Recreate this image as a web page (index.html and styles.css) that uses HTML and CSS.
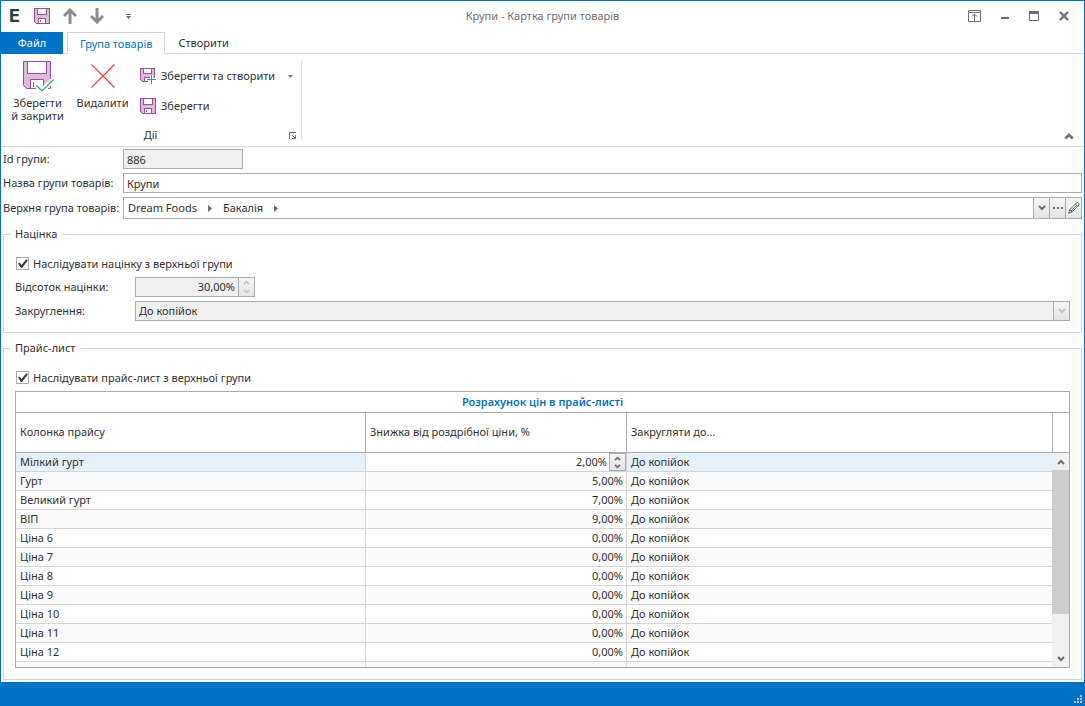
FILE: index.html
```html
<!DOCTYPE html>
<html lang="uk">
<head>
<meta charset="utf-8">
<title>Крупи - Картка групи товарів</title>
<link rel="stylesheet" href="styles.css">
</head>
<body>
<svg class="defs" aria-hidden="true">
  <symbol id="floppy" viewBox="0 0 16 16">
    <path d="M.5.5h15v15h-13l-2-2z" fill="#ddbadb" stroke="#9b4f96"/>
    <path d="M3.500.5h9v6h-9z" fill="#fff" stroke="#9b4f96"/>
    <path d="M4.500 15.500v-5h7v5z" fill="#fff" stroke="#9b4f96"/>
    <path d="M6.500 12v2" stroke="#9b4f96"/>
  </symbol>
  <symbol id="up" viewBox="0 0 8 6"><path d="M1 5l3-3 3 3" fill="none" stroke="currentColor" stroke-width="2"/></symbol>
  <symbol id="down" viewBox="0 0 8 6"><path d="M1 1l3 3 3-3" fill="none" stroke="currentColor" stroke-width="2"/></symbol>
</svg>
<div class="window">
  <header class="titlebar">
    <div class="quick">
      <span class="logo">E</span>
      <button class="tool" aria-label="Зберегти"><svg width="16" height="16" shape-rendering="crispEdges"><use href="#floppy"/></svg></button>
      <button class="tool" aria-label="Попередній"><svg width="14" height="16" viewBox="0 0 14 16"><path d="M7 16V2M1 8l6-6 6 6" fill="none" stroke="#8c8c8c" stroke-width="3"/></svg></button>
      <button class="tool" aria-label="Наступний"><svg width="14" height="16" viewBox="0 0 14 16"><path d="M7 0v14M1 8l6 6 6-6" fill="none" stroke="#8c8c8c" stroke-width="3"/></svg></button>
      <button class="tool" aria-label="Налаштувати панель"><svg width="5" height="5" viewBox="0 0 5 5"><path d="M0 0h5v1H0zM0 2h5L2.500 5z" fill="#6d6d6d"/></svg></button>
    </div>
    <h1 class="title">Крупи - Картка групи товарів</h1>
    <div class="controls">
      <button class="tool" aria-label="Показ стрічки"><svg width="13" height="12" viewBox="0 0 13 12"><path d="M.5.5h12v11H.5zM.5 2.500h12M6.500 11V4M4 6.500L6.500 4 9 6.500" fill="none" stroke="#6d6d6d"/></svg></button>
      <button class="tool" aria-label="Згорнути"><svg width="8" height="12" viewBox="0 0 8 12"><path d="M0 7h8v2H0z" fill="#6d6d6d"/></svg></button>
      <button class="tool" aria-label="Розгорнути"><svg width="10" height="10" viewBox="0 0 10 10"><path d="M.5.5h9v9h-9z" fill="none" stroke="#6d6d6d"/><path d="M0 0h10v3H0z" fill="#6d6d6d"/></svg></button>
      <button class="tool" aria-label="Закрити"><svg width="10" height="10" viewBox="0 0 10 10"><path d="M1 1l8 8M9 1L1 9" stroke="#6d6d6d" stroke-width="2.400"/></svg></button>
    </div>
  </header>

  <nav class="tabs">
    <button class="tab file">Файл</button>
    <button class="tab active">Група товарів</button>
    <button class="tab">Створити</button>
  </nav>

  <section class="ribbon">
    <div class="group">
      <div class="actions">
        <button class="large">
          <svg width="32" height="32" viewBox="0 0 32 32">
            <path d="M1.500 1.500h27v27h-24l-3-3z" fill="#ddbadb" stroke="#9b4f96"/>
            <path d="M5.500 1.500h19v12h-19z" fill="#fff" stroke="#9b4f96"/>
            <path d="M8.500 28.500v-9h13v9z" fill="#fff" stroke="#9b4f96"/>
            <path d="M11.500 22v5" stroke="#9b4f96"/>
            <path d="M14 25l6 6 12-12" fill="none" stroke="#fff" stroke-width="5"/>
            <path d="M14.500 25.500l5.500 5.500 11.500-11.500" fill="none" stroke="#21ad57" stroke-width="1.200"/>
          </svg>
          <span>Зберегти<br>й закрити</span>
        </button>
        <button class="large">
          <svg width="32" height="32" viewBox="0 0 32 32"><path d="M4.500 4.500l23 23M27.500 4.500l-23 23" stroke="#f04043" stroke-width="1.200"/></svg>
          <span>Видалити</span>
        </button>
        <div class="smalls">
          <button class="small">
            <svg width="16" height="16" viewBox="0 0 16 16" shape-rendering="crispEdges">
              <path d="M.5.5h14v13h-12l-2-2z" fill="#ddbadb" stroke="#9b4f96"/>
              <path d="M3.500.5h8v5h-8z" fill="#fff" stroke="#9b4f96"/>
              <path d="M4.500 13.500v-4h5v4z" fill="#fff" stroke="#9b4f96"/>
              <path d="M10 7h3v3h3v6H8v-3H6v-3h4z" fill="#fff"/>
              <path d="M11.500 7v9M7 11.500h9" stroke="#21ad57"/>
            </svg>
            <span>Зберегти та створити</span>
            <svg class="more" width="5" height="3" viewBox="0 0 5 3"><path d="M0 0h5L2.500 3z" fill="#7c7c7c"/></svg>
          </button>
          <button class="small">
            <svg width="16" height="16" shape-rendering="crispEdges"><use href="#floppy"/></svg>
            <span>Зберегти</span>
          </button>
        </div>
      </div>
      <div class="group-foot">
        <span>Дії</span>
        <button class="tool" aria-label="Параметри дій"><svg width="7" height="7" viewBox="0 0 7 7"><path d="M.5 7V.5H7M3 3l3 3M6.500 3v3.500H3" fill="none" stroke="#6d6d6d"/></svg></button>
      </div>
    </div>
    <button class="tool collapse" aria-label="Згорнути стрічку"><svg width="10" height="8" viewBox="0 0 8 6"><use href="#up"/></svg></button>
  </section>

  <main class="form">
    <div class="row">
      <label for="gid">Id групи:</label>
      <input class="box short" id="gid" value="886" disabled>
    </div>
    <div class="row">
      <label for="gname">Назва групи товарів:</label>
      <input class="box" id="gname" value="Крупи">
    </div>
    <div class="row path-row">
      <span class="label">Верхня група товарів:</span>
      <div class="box crumbs">
        <div class="trail">
          <span>Dream Foods</span>
          <svg width="4" height="7" viewBox="0 0 4 7"><path d="M0 0l4 3.500L0 7z" fill="#6d6d6d"/></svg>
          <span>Бакалія</span>
          <svg width="4" height="7" viewBox="0 0 4 7"><path d="M0 0l4 3.500L0 7z" fill="#6d6d6d"/></svg>
        </div>
        <button class="side" aria-label="Відкрити список"><svg width="8" height="6"><use href="#down"/></svg></button>
        <button class="side" aria-label="Вибрати"><svg width="10" height="2" viewBox="0 0 10 2"><path d="M0 0h2v2H0zM4 0h2v2H4zM8 0h2v2H8z" fill="#6d6d6d"/></svg></button>
        <button class="side" aria-label="Редагувати"><svg width="12" height="12" viewBox="0 0 12 12"><path d="M.7 11.300l1-3.600 6.800-6.800q1-.8 2 .2t.2 2L4 10zM7.500 2l2.500 2.500M1.700 7.700L4 10M3 9l5.500-5.500" fill="none" stroke="#6d6d6d"/></svg></button>
      </div>
    </div>

    <fieldset class="panel">
      <legend>Націнка</legend>
      <label class="check"><input type="checkbox" checked>Наслідувати націнку з верхньої групи</label>
      <div class="row inner">
        <label for="pct">Відсоток націнки:</label>
        <div class="box short spin off">
          <input id="pct" value="30,00%" disabled>
          <div class="steps"><button disabled aria-label="Більше"><svg width="7" height="5"><use href="#up"/></svg></button><button disabled aria-label="Менше"><svg width="7" height="5"><use href="#down"/></svg></button></div>
        </div>
      </div>
      <div class="row inner">
        <label for="rnd">Закруглення:</label>
        <div class="box combo off">
          <select id="rnd" disabled><option>До копійок</option></select>
          <span class="side"><svg width="8" height="6"><use href="#down"/></svg></span>
        </div>
      </div>
    </fieldset>

    <fieldset class="panel prices">
      <legend>Прайс-лист</legend>
      <label class="check"><input type="checkbox" checked>Наслідувати прайс-лист з верхньої групи</label>
      <div class="grid">
        <table>
          <colgroup><col class="c-name"><col class="c-pct"><col><col class="c-bar"></colgroup>
          <thead>
            <tr class="band"><th colspan="4">Розрахунок цін в прайс-листі</th></tr>
            <tr class="heads"><th>Колонка прайсу</th><th>Знижка від роздрібної ціни, %</th><th>Закругляти до...</th><th></th></tr>
          </thead>
          <tbody>
            <tr class="current"><td>Мілкий гурт</td><td class="edit"><div class="spin"><input aria-label="Знижка" value="2,00%"><div class="steps"><button aria-label="Більше"><svg width="7" height="5"><use href="#up"/></svg></button><button aria-label="Менше"><svg width="7" height="5"><use href="#down"/></svg></button></div></div></td><td>До копійок</td><td></td></tr>
            <tr><td>Гурт</td><td>5,00%</td><td>До копійок</td><td></td></tr>
            <tr><td>Великий гурт</td><td>7,00%</td><td>До копійок</td><td></td></tr>
            <tr><td>ВІП</td><td>9,00%</td><td>До копійок</td><td></td></tr>
            <tr><td>Ціна 6</td><td>0,00%</td><td>До копійок</td><td></td></tr>
            <tr><td>Ціна 7</td><td>0,00%</td><td>До копійок</td><td></td></tr>
            <tr><td>Ціна 8</td><td>0,00%</td><td>До копійок</td><td></td></tr>
            <tr><td>Ціна 9</td><td>0,00%</td><td>До копійок</td><td></td></tr>
            <tr><td>Ціна 10</td><td>0,00%</td><td>До копійок</td><td></td></tr>
            <tr><td>Ціна 11</td><td>0,00%</td><td>До копійок</td><td></td></tr>
            <tr><td>Ціна 12</td><td>0,00%</td><td>До копійок</td><td></td></tr>
            <tr><td></td><td></td><td>До копійок</td><td></td></tr>
          </tbody>
        </table>
        <div class="scroll">
          <button aria-label="Вгору"><svg width="8" height="6"><use href="#up"/></svg></button>
          <div class="track"><div class="thumb"></div></div>
          <button aria-label="Вниз"><svg width="8" height="6"><use href="#down"/></svg></button>
        </div>
      </div>
    </fieldset>
  </main>

  <footer class="status">
    <svg width="8" height="8" viewBox="0 0 8 8"><path d="M6 0h2v2H6zM3 3h2v2H3zM6 3h2v2H6zM0 6h2v2H0zM3 6h2v2H3zM6 6h2v2H6z" fill="#bcc4cc"/></svg>
  </footer>
</div>
</body>
</html>
```
FILE: styles.css
```css
* {
  box-sizing: border-box;
}

body {
  margin: 0;
  font: 11px/14px "Noto Sans", "Open Sans", sans-serif;
  color: #303030;
}

button,
input,
select {
  margin: 0;
  padding: 0;
  border: 0;
  background: none;
  font: inherit;
  color: inherit;
  opacity: 1;
}

svg {
  display: block;
  flex: none;
}

.defs {
  position: absolute;
  width: 0;
  height: 0;
}

.window {
  display: flex;
  flex-direction: column;
  height: 100vh;
  border: 1px solid #0072c6;
  border-bottom: 0;
  background: #fff;
}

.titlebar {
  display: grid;
  grid-template-columns: 1fr auto 1fr;
  align-items: center;
  height: 30px;
  flex: none;
}

.title {
  margin: 0;
  font-size: 11px;
  font-weight: 400;
  color: #6d6d6d;
}

.quick {
  display: flex;
  align-items: center;
  gap: 13px;
  padding-left: 8px;
}

.quick .tool:last-child {
  margin-left: 9px;
}

.logo {
  width: 12px;
  font-family: Inter, "Noto Sans", sans-serif;
  font-size: 18px;
  font-weight: 700;
  line-height: 20px;
  color: #2b3a44;
}

.controls {
  display: flex;
  align-items: center;
  justify-content: flex-end;
  gap: 20px;
  padding-right: 15px;
}

.tabs {
  display: flex;
  height: 23px;
  flex: none;
  padding-top: 1px;
  border-bottom: 1px solid #d4d4d4;
}

.tab {
  height: 22px;
  padding: 0 13px;
}

.tab.file {
  width: 62px;
  margin-right: 4px;
  background: #0072c6;
  color: #fff;
}

.tab.active {
  padding: 0 12px;
  border: 1px solid #d4d4d4;
  border-bottom: 0;
  background: #fff;
  color: #0072c6;
}

.ribbon {
  display: flex;
  justify-content: space-between;
  height: 93px;
  flex: none;
  padding: 6px 10px 6px 4px;
  border-bottom: 1px solid #d4d4d4;
}

.group {
  display: flex;
  flex-direction: column;
  justify-content: space-between;
  width: 297px;
  border-right: 1px solid #e1e1e1;
}

.actions {
  display: flex;
}

.large {
  display: flex;
  flex-direction: column;
  align-items: center;
  gap: 4px;
  width: 65px;
  line-height: 13px;
}

.smalls {
  display: flex;
  flex-direction: column;
  gap: 10px;
  padding: 6px 0 0 5px;
}

.small {
  display: flex;
  align-items: center;
  gap: 5px;
  height: 20px;
}

.more {
  margin-left: 8px;
}

.group-foot {
  display: grid;
  grid-template-columns: 1fr auto 1fr;
  align-items: center;
  height: 12px;
  padding-right: 5px;
}

.group-foot span {
  grid-column: 2;
}

.group-foot .tool {
  justify-self: end;
}

.collapse {
  align-self: flex-end;
  color: #6d6d6d;
}

.form {
  display: flex;
  flex-direction: column;
  flex: 1;
  min-height: 0;
  gap: 4px;
  padding: 2px 2px;
}

.row {
  display: grid;
  grid-template-columns: 120px 1fr;
  align-items: center;
}

.row .label,
.row label {
  white-space: nowrap;
}

.box {
  width: 100%;
  height: 20px;
  padding-left: 3px;
  border: 1px solid #ababab;
  background: #fff;
}

.short {
  width: 120px;
}

.off,
.box:disabled {
  background: #f0f0f0;
}

.crumbs {
  display: flex;
  height: 22px;
  padding-left: 4px;
}

.trail {
  display: flex;
  align-items: center;
  flex: 1;
  gap: 11px;
}

.side {
  display: flex;
  align-items: center;
  justify-content: center;
  width: 16px;
  border-left: 1px solid #ababab;
  background: linear-gradient(#f6f6f6, #e4e4e4);
  color: #6d6d6d;
}

.off .side,
.off .steps {
  color: #c3c3c3;
}

.panel {
  min-width: 0;
  margin: 4px 0 0;
  padding: 15px 11px 11px;
  border: 1px solid #d4d4d4;
}

.panel legend {
  margin-left: -4px;
  padding: 0 5px 0 4px;
}

.check {
  display: flex;
  align-items: center;
  gap: 4px;
  width: max-content;
  height: 15px;
  padding-left: 1px;
}

.check input {
  appearance: none;
  width: 13px;
  height: 13px;
  border: 1px solid #ababab;
}

.check input:checked::before {
  content: "";
  display: block;
  width: 11px;
  height: 11px;
  background: #3c3c3c;
  clip-path: polygon(9% 50%, 27% 43%, 41% 63%, 82% 14%, 95% 14%, 95% 28%, 46% 92%, 36% 92%);
}

.inner {
  margin-top: 4px;
}

.check + .inner {
  margin-top: 6px;
}

.spin,
.combo {
  display: flex;
}

.spin input {
  flex: 1;
  min-width: 0;
  padding-right: 3px;
  text-align: right;
}

.steps {
  display: flex;
  flex-direction: column;
  width: 16px;
  border-left: 1px solid #ababab;
  background: linear-gradient(#f6f6f6, #e4e4e4);
  color: #6d6d6d;
}

.steps button {
  display: flex;
  flex: 1;
  align-items: center;
  justify-content: center;
}

.combo select {
  flex: 1;
  appearance: none;
}

.prices {
  display: flex;
  flex-direction: column;
  flex: 1;
  min-height: 0;
}

.grid {
  position: relative;
  flex: 1;
  min-height: 0;
  margin-top: 6px;
  border: 1px solid #ababab;
  overflow: hidden;
}

table {
  width: 100%;
  table-layout: fixed;
  border-spacing: 0;
}

.c-name {
  width: 350px;
}

.c-pct {
  width: 261px;
}

.c-bar {
  width: 16px;
}

th,
td {
  padding: 0 4px 1px;
  text-align: left;
  font-weight: 400;
  white-space: nowrap;
  border-right: 1px solid #d4d4d4;
  border-bottom: 1px solid #d4d4d4;
}

th {
  border-color: #ababab;
}

th:last-child,
td:last-child {
  padding: 0;
  border-right: 0;
}

td:nth-child(3) {
  border-right: 0;
}

td:nth-child(2) {
  padding-right: 3px;
  text-align: right;
}

.band th {
  height: 21px;
  text-align: center;
  font-weight: 600;
  color: #0072c6;
}

.heads th {
  height: 40px;
}

tbody td {
  height: 19px;
}

tbody tr:nth-child(even) {
  background: #fafafa;
}

tbody .current {
  background: #e5f1fb;
}

td.edit:nth-child(2) {
  padding: 0;
  background: #fff;
}

.edit .spin {
  height: 18px;
}

.edit .spin input {
  padding-right: 2px;
}

.edit .steps {
  width: 17px;
  border: 1px solid #ababab;
}

.scroll {
  position: absolute;
  top: 61px;
  right: 0;
  bottom: 0;
  display: flex;
  flex-direction: column;
  width: 17px;
  background: #f0f0f0;
  color: #6d6d6d;
}

.scroll button {
  display: flex;
  align-items: center;
  justify-content: center;
  height: 17px;
}

.track {
  flex: 1;
}

.thumb {
  height: 80%;
  background: #cdcdcd;
}

.status {
  display: flex;
  align-items: flex-end;
  justify-content: flex-end;
  height: 24px;
  flex: none;
  padding: 3px 2px;
  background: #0072c6;
}
```
